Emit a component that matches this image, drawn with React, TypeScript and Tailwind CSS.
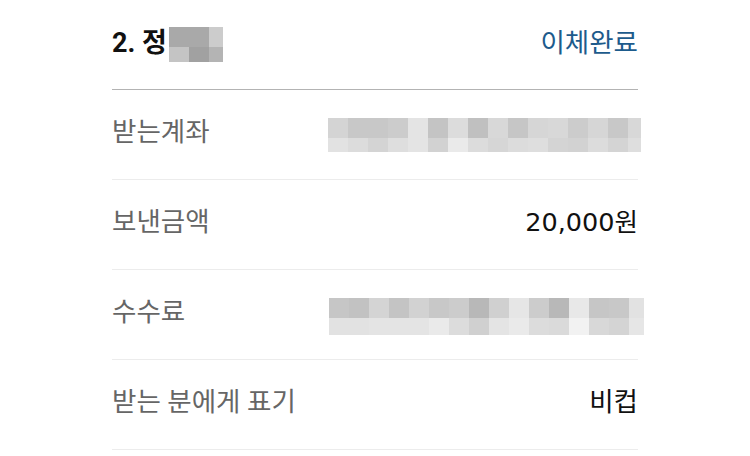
const FONT = "font-['Roboto','Noto_Sans_CJK_KR','Noto_Sans',sans-serif]";
const NUM_FONT = "font-['DejaVu_Sans','Noto_Sans_CJK_KR',sans-serif]";

type Mosaic = { cols: number[]; rows: number[]; colors: string[][] };

const nameBlur: Mosaic = {
  cols: [20, 20, 14],
  rows: [20, 15],
  colors: [
    ["#a9a9a9", "#a9a9a9", "#cccccc"],
    ["#c4c4c4", "#a1a1a1", "#b4b4b4"],
  ],
};

const accountBlur: Mosaic = {
  cols: [20, 20, 20, 20, 20, 20, 20, 20, 20, 20, 20, 20, 20, 20, 20, 13],
  rows: [20, 14],
  colors: [
    ["#d4d4d4", "#c8c8c8", "#c8c8c8", "#cccccc", "#e4e4e4", "#c4c4c4", "#dcdcdc", "#c0c0c0", "#d8d8d8", "#c6c6c6", "#d6d6d6", "#d8d8d8", "#cccccc", "#d6d6d6", "#c8c8c8", "#d8d8d8"],
    ["#e2e2e2", "#dcdcdc", "#d4d4d4", "#dedede", "#e4e4e4", "#d2d2d2", "#eaeaea", "#dcdcdc", "#d6d6d6", "#dcdcdc", "#dedede", "#d4d4d4", "#d2d2d2", "#dcdcdc", "#d4d4d4", "#dedede"],
  ],
};

const feeBlur: Mosaic = {
  cols: [20, 20, 20, 20, 20, 20, 20, 20, 20, 20, 20, 20, 20, 20, 20, 15],
  rows: [20, 17],
  colors: [
    ["#c6c6c6", "#c2c2c2", "#d4d4d4", "#c4c4c4", "#d2d2d2", "#c8c8c8", "#cccccc", "#b8b8b8", "#d0d0d0", "#e6e6e6", "#cccccc", "#b8b8b8", "#e8e8e8", "#c6c6c6", "#c8c8c8", "#e2e2e2"],
    ["#e2e2e2", "#e2e2e2", "#e4e4e4", "#e4e4e4", "#e4e4e4", "#eaeaea", "#dcdcdc", "#d0d0d0", "#e4e4e4", "#eaeaea", "#dcdcdc", "#dadada", "#f2f2f2", "#d8d8d8", "#d4d4d4", "#e6e6e6"],
  ],
};

function Blur({ m }: { m: Mosaic }) {
  return (
    <div className="flex flex-col">
      {m.rows.map((h, r) => (
        <div key={r} className="flex">
          {m.cols.map((w, c) => (
            <div key={c} style={{ width: w, height: h, backgroundColor: m.colors[r][c] }} />
          ))}
        </div>
      ))}
    </div>
  );
}

function Row({ label, children }: { label: string; children: React.ReactNode }) {
  return (
    <div className="h-[90px] flex items-center justify-between border-b border-[#ececec]">
      <span className="text-[26.5px] leading-none text-[#666666] mb-[4px]">{label}</span>
      {children}
    </div>
  );
}

export default function App() {
  return (
    <div className={`w-[750px] h-[456px] bg-white overflow-hidden ${FONT}`}>
      <div className="px-[112px]">
        <div className="h-[90px] flex items-center justify-between border-b-[1.5px] border-[#b3b3b3]">
          <div className="flex items-center gap-[2px]">
            <span className="text-[27px] leading-none font-bold text-[#111111] mb-[2px]">2. 정</span>
            <Blur m={nameBlur} />
          </div>
          <span className="text-[26.5px] leading-none text-[#1d5b8c] mb-[2px]">이체완료</span>
        </div>
        <Row label="받는계좌">
          <div className="mr-[-3px] mt-[1px]">
            <Blur m={accountBlur} />
          </div>
        </Row>
        <Row label="보낸금액">
          <span className={`text-[25.5px] leading-none text-[#111111] mb-[4px] ${NUM_FONT}`}>20,000원</span>
        </Row>
        <Row label="수수료">
          <div className="mr-[-6px] mt-[4px]">
            <Blur m={feeBlur} />
          </div>
        </Row>
        <Row label="받는 분에게 표기">
          <span className="text-[26.5px] leading-none text-[#111111] mb-[4px]">비컵</span>
        </Row>
      </div>
    </div>
  );
}
